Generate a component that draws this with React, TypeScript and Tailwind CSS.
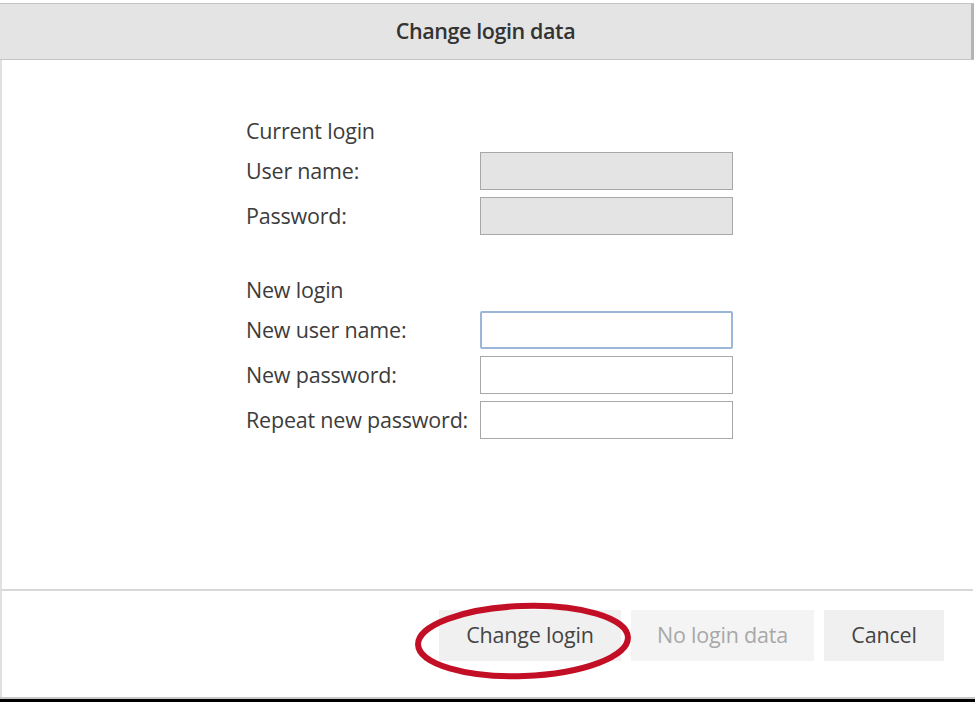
import React from 'react';

const font = { fontFamily: '"Open Sans", "Noto Sans", sans-serif' };

const Field = ({ label, disabled, focused }: { label: string; disabled?: boolean; focused?: boolean }) => (
  <div className="flex items-center h-[38px] mt-[7px]">
    <span className="w-[234px] text-[21.5px] tracking-[-0.2px] text-[#3c3c3c]">{label}</span>
    <input
      disabled={disabled}
      className={
        'w-[253px] h-[38px] outline-none ' +
        (disabled
          ? 'bg-[#e4e4e4] border border-[#a8a8a8]'
          : focused
          ? 'bg-white border-2 border-[#9cb6da] rounded-[2px]'
          : 'bg-white border border-[#a8a8a8]')
      }
    />
  </div>
);

export default function App() {
  return (
    <div className="relative w-[975px] h-[702px] bg-white flex flex-col overflow-hidden" style={font}>
      {/* Header */}
      <div className="mt-[3px] h-[57px] mr-[1px] flex items-center justify-center bg-[#e4e4e4] border-y border-[#c4c4c4] border-r-[3px] border-r-[#b4b4b4]">
        <h2 className="text-[21.5px] font-semibold text-[#333] tracking-[-0.4px]">Change login data</h2>
      </div>

      {/* Body */}
      <div className="flex-1 border-l-2 border-[#e0e0e0] pl-[244px] pt-[57px]">
        <div className="h-[28px] flex items-center text-[21.5px] tracking-[-0.2px] text-[#3c3c3c]">Current login</div>
        <Field label="User name:" disabled />
        <Field label="Password:" disabled />

        <div className="h-[28px] mt-[41px] flex items-center text-[21.5px] tracking-[-0.2px] text-[#3c3c3c]">New login</div>
        <Field label="New user name:" focused />
        <Field label="New password:" />
        <Field label="Repeat new password:" />
      </div>

      {/* Footer */}
      <div className="h-[108px] border-t-2 border-[#d8d8d8] border-l-2 border-l-[#e0e0e0] mr-[2px] flex items-start justify-end pt-[19px] pr-[29px] gap-[10px]">
        <button className="w-[182px] h-[51px] bg-[#f0f0f0] text-[21.5px] tracking-[-0.2px] text-[#444]">Change login</button>
        <button className="w-[183px] h-[51px] bg-[#f4f4f4] text-[21.5px] tracking-[-0.2px] text-[#a8a8a8]" disabled>No login data</button>
        <button className="w-[120px] h-[51px] bg-[#f0f0f0] text-[21.5px] tracking-[-0.2px] text-[#444]">Cancel</button>
      </div>
      <div className="h-[2px] bg-[#c8c8c8]" />
      <div className="h-[3px] bg-black" />

      {/* Annotation */}
      <svg className="absolute left-[413px] top-[601px] pointer-events-none" width="220" height="82" viewBox="0 0 220 82">
        <ellipse cx="110" cy="40" rx="105" ry="35" fill="none" stroke="#c20f25" strokeWidth="6" transform="rotate(-2 110 40)" />
      </svg>
    </div>
  );
}
